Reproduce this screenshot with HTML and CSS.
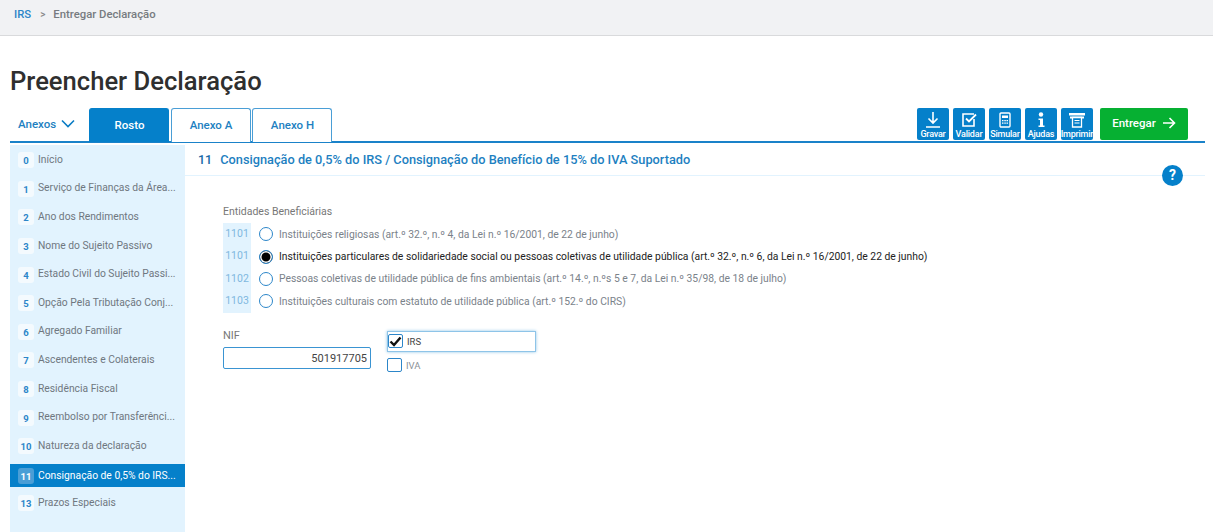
FILE: index.html
```html
<!DOCTYPE html>
<html lang="pt">
<head>
<meta charset="utf-8">
<title>Preencher Declaração</title>
<link rel="stylesheet" href="styles.css">
</head>
<body>
<nav class="crumbs"><a class="crumb-link">IRS</a><span class="crumb-sep">&gt;</span><span class="crumb-cur">Entregar Declaração</span></nav>
<main class="page">
  <h1 class="title">Preencher Declaração</h1>
  <div class="tabbar">
    <div class="anexos">Anexos
      <svg class="chev" width="14" height="9" viewBox="0 0 14 9"><path d="M1 1.500l6 6 6-6" fill="none" stroke="#0a7cc4" stroke-width="1.600"/></svg>
    </div>
    <div class="tab tab-on">Rosto</div>
    <div class="tab">Anexo A</div>
    <div class="tab">Anexo H</div>
    <div class="tools">
      <div class="tool"><svg width="18" height="18" viewBox="0 0 18 18"><path d="M9 1v11M4.500 7.500L9 12l4.500-4.500M2 16h14" fill="none" stroke="#fff" stroke-width="1.600"/></svg><span>Gravar</span></div>
      <div class="tool"><svg width="18" height="18" viewBox="0 0 18 18"><path d="M14 8v7H3V3h11" fill="none" stroke="#fff" stroke-width="1.600"/><path d="M6 7.500l3 3 7-7" fill="none" stroke="#fff" stroke-width="1.800"/></svg><span>Validar</span></div>
      <div class="tool"><svg width="18" height="18" viewBox="0 0 18 18"><rect x="4" y="2" width="10" height="14" rx="1" fill="none" stroke="#fff" stroke-width="1.400"/><path d="M6 4.500h6v2.500H6zM6 9h1.500v1.200H6zM8.300 9h1.500v1.200H8.300zM10.500 9H12v1.200h-1.500zM6 11.500h1.500v1.200H6zM8.300 11.500h1.500v1.200H8.300zM10.500 11.500H12v1.200h-1.500z" fill="#fff"/></svg><span>Simular</span></div>
      <div class="tool"><svg width="18" height="18" viewBox="0 0 18 18"><circle cx="9" cy="3.500" r="2.200" fill="#fff"/><path d="M6.500 7.500H11v7h1.500V16h-6v-1.500H8V9H6.500z" fill="#fff"/></svg><span>Ajudas</span></div>
      <div class="tool"><svg width="20" height="18" viewBox="0 0 20 18"><path d="M2 2h16v2.500H2zM3 5.500h14v2H15V6H5v1.500H3z" fill="#fff"/><path d="M5.500 6.500h9V16h-9z" fill="none" stroke="#fff" stroke-width="1.300"/><path d="M7.500 9.500h5M7.500 12h5" stroke="#fff"/></svg><span>Imprimir</span></div>
      <button class="submit">Entregar
        <svg width="14" height="12" viewBox="0 0 14 12"><path d="M1 6h11.500M7.500 1l5 5-5 5" fill="none" stroke="#fff" stroke-width="1.600"/></svg>
      </button>
    </div>
  </div>
  <div class="layout">
    <ul class="side">
      <li class="item"><b class="num">0</b><span class="lab">Início</span></li>
      <li class="item"><b class="num">1</b><span class="lab">Serviço de Finanças da Área...</span></li>
      <li class="item"><b class="num">2</b><span class="lab">Ano dos Rendimentos</span></li>
      <li class="item"><b class="num">3</b><span class="lab">Nome do Sujeito Passivo</span></li>
      <li class="item"><b class="num">4</b><span class="lab">Estado Civil do Sujeito Passi...</span></li>
      <li class="item"><b class="num">5</b><span class="lab">Opção Pela Tributação Conj...</span></li>
      <li class="item"><b class="num">6</b><span class="lab">Agregado Familiar</span></li>
      <li class="item"><b class="num">7</b><span class="lab">Ascendentes e Colaterais</span></li>
      <li class="item"><b class="num">8</b><span class="lab">Residência Fiscal</span></li>
      <li class="item"><b class="num">9</b><span class="lab">Reembolso por Transferênci...</span></li>
      <li class="item"><b class="num">10</b><span class="lab">Natureza da declaração</span></li>
      <li class="item item-on"><b class="num">11</b><span class="lab">Consignação de 0,5% do IRS...</span></li>
      <li class="item"><b class="num">13</b><span class="lab">Prazos Especiais</span></li>
    </ul>
    <section class="content">
      <h2 class="head"><span class="head-num">11</span>Consignação de 0,5% do IRS / Consignação do Benefício de 15% do IVA Suportado</h2>
      <div class="help-row"><div class="help">?</div></div>
      <div class="form">
        <div class="legend">Entidades Beneficiárias</div>
        <div class="opts">
          <div class="opt"><span class="code">1101</span><i class="radio"></i><span class="opt-text">Instituições religiosas (art.º 32.º, n.º 4, da Lei n.º 16/2001, de 22 de junho)</span></div>
          <div class="opt opt-on"><span class="code">1101</span><i class="radio"></i><span class="opt-text">Instituições particulares de solidariedade social ou pessoas coletivas de utilidade pública (art.º 32.º, n.º 6, da Lei n.º 16/2001, de 22 de junho)</span></div>
          <div class="opt"><span class="code">1102</span><i class="radio"></i><span class="opt-text">Pessoas coletivas de utilidade pública de fins ambientais (art.º 14.º, n.ºs 5 e 7, da Lei n.º 35/98, de 18 de julho)</span></div>
          <div class="opt"><span class="code">1103</span><i class="radio"></i><span class="opt-text">Instituições culturais com estatuto de utilidade pública (art.º 152.º do CIRS)</span></div>
        </div>
        <div class="nif-row">
          <div class="nif"><div class="nif-label">NIF</div><div class="nif-input">501917705</div></div>
          <div class="checks">
            <div class="check check-on"><i class="box"><svg width="13" height="11" viewBox="0 0 13 11"><path d="M1.500 5.500l3.500 3.500 6.500-7.500" fill="none" stroke="#111" stroke-width="2.400"/></svg></i><span>IRS</span></div>
            <div class="check"><i class="box"></i><span>IVA</span></div>
          </div>
        </div>
      </div>
    </section>
  </div>
</main>
</body>
</html>
```
FILE: styles.css
```css
* { box-sizing: border-box; }
html, body { margin: 0; padding: 0; }
body { height: 532px; overflow: hidden; background: #fff; font-family: Roboto, "Liberation Sans", sans-serif; color: #6b7580; }
.crumbs { height: 36px; background: #f1f2f4; border-bottom: 1px solid #d9dadc; padding: 8px 0 0 14px; font-size: 11.300px; line-height: 14px; font-weight: 500; display: flex; }
.crumb-link { color: #2c86c9; }
.crumb-sep { color: #888; margin: 0 8px 0 9px; font-size: 10px; }
.crumb-cur { color: #777b80; }
.page { padding: 0 8px 0 10px; }
.title { margin: 30px 0 0; font-size: 25.600px; line-height: 30px; font-weight: 500; color: #2f2f2f; height: 42px; }
.tabbar { display: flex; align-items: flex-end; height: 35px; border-bottom: 2px solid #1a82c9; }
.anexos { width: 79px; height: 33px; padding: 8px 0 0 8px; color: #1d7fc1; font-size: 11.500px; font-weight: 500; line-height: 16px; }
.chev { margin-left: 2px; }
.tab { width: 80px; height: 34px; margin-right: 1.500px; margin-bottom: -1px; padding-left: 1px; border: 1px solid #4a9ed6; border-bottom: 0; border-radius: 3px 3px 0 0; color: #1d7fc1; font-size: 11.500px; font-weight: 500; text-align: center; line-height: 33px; background: #fff; }
.tab-on { background: #0580ca; color: #fff; border-color: #0580ca; }
.tools { margin-left: auto; margin-right: 17px; height: 32px; display: flex; gap: 4px; align-self: flex-start; }
.tool { width: 32px; height: 32px; background: #0580ca; border-radius: 2px; display: flex; flex-direction: column; align-items: center; color: #fff; font-size: 9px; font-weight: 500; line-height: 9px; padding-top: 3px; overflow: hidden; white-space: nowrap; letter-spacing: -0.200px; }
.tool span { margin-top: 1px; }
.submit { width: 88px; height: 32px; margin-left: 3px; border: 0; border-radius: 2px; background: #06b032; color: #fff; font: 500 11.500px Roboto, sans-serif; display: flex; align-items: center; justify-content: center; gap: 6px; padding: 0 0 3px; }
.layout { display: flex; height: 389px; }
.side { list-style: none; margin: 2px 0 0; padding: 0; width: 175px; background: #e2f3fe; }
.item { height: 28.600px; display: flex; align-items: center; padding: 0 0 0 8px; font-size: 10.300px; }
.num { width: 16px; height: 16px; border-radius: 3px; background: #f4fafe; color: #2c86c9; font-size: 9.500px; font-weight: 700; text-align: center; line-height: 17px; margin: 2px 4px 0 0; flex: none; }
.lab { color: #6f7780; white-space: nowrap; }
.item-on { background: #0580ca; height: 23px; margin: 4px 0 1.600px; }
.item-on .num { background: #4a9ed6; color: #fff; margin-top: 1px; }
.item-on .lab { color: #fff; }
.content { flex: 1; min-width: 0; }
.head { margin: 0; height: 33px; border-bottom: 1px solid #e2f3fe; padding: 9px 0 0 13px; font-size: 12.780px; line-height: 16px; font-weight: 500; color: #1d7fc1; }
.head-num { color: #1a6aa6; margin-right: 8px; font-size: 12.500px; }
.help-row { display: flex; justify-content: flex-end; height: 0; padding-right: 22px; }
.help { width: 21px; height: 21px; margin-top: -11px; border-radius: 50%; background: #0580ca; color: #fff; font-size: 14px; font-weight: 700; text-align: center; line-height: 21px; flex: none; }
.form { padding: 29px 0 0 38px; }
.legend { font-size: 10.500px; line-height: 14px; color: #777; }
.opts { margin-top: 4px; }
.opt { display: flex; align-items: center; height: 22.400px; }
.code { width: 28px; height: 100%; background: #e2f3fe; color: #7fb8de; font-size: 10.500px; text-align: center; line-height: 21px; }
.radio { width: 14px; height: 14px; margin: 0 6px 0 8px; border: 1.300px solid #2c86c9; border-radius: 50%; background: #fff; flex: none; }
.opt-text { font-size: 10.340px; color: #7a828a; white-space: nowrap; }
.opt-on .opt-text { color: #222; }
.opt-on .radio { background: #000; box-shadow: inset 0 0 0 1.500px #fff; }
.nif-row { display: flex; margin-top: 16px; }
.nif { width: 148px; }
.nif-label { font-size: 11px; line-height: 14px; color: #777; }
.nif-input { height: 22px; margin-top: 4px; border: 1px solid #3a94d2; border-radius: 2px; text-align: right; padding-right: 3px; font-size: 11px; line-height: 21px; color: #444; }
.checks { margin: 2px 0 0 16px; width: 149px; }
.check { display: flex; align-items: center; height: 21px; font-size: 9.500px; color: #8a9096; margin-bottom: 3px; }
.check-on { border: 1px solid #8ec4e8; box-shadow: 0 0 3px #8ec4e8; color: #444; }
.box { width: 15px; height: 14px; margin-right: 4px; border: 1px solid #2c86c9; border-radius: 2px; display: flex; align-items: center; justify-content: center; flex: none; }
```
